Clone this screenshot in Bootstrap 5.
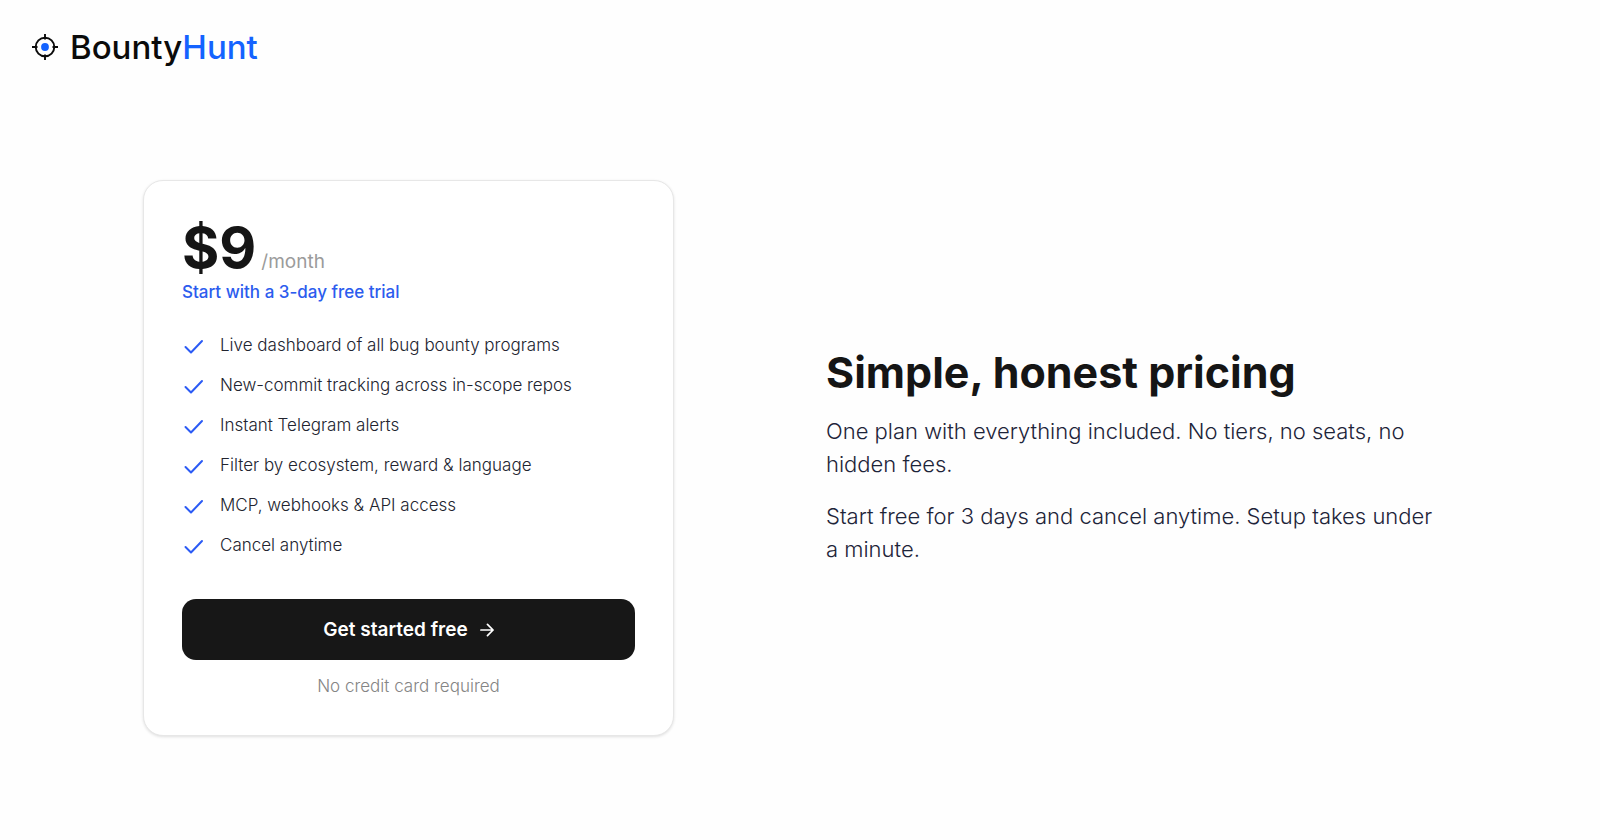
<!DOCTYPE html>
<html lang="en">
<head>
<meta charset="utf-8">
<meta name="viewport" content="width=device-width, initial-scale=1">
<title>BountyHunt – Pricing</title>
<link href="https://cdn.jsdelivr.net/npm/bootstrap@5.3.0/dist/css/bootstrap.min.css" rel="stylesheet">
<style>
  body { font-family: "Inter", "Liberation Sans", sans-serif; color: #151515; background: #fefefe; }
  .site-header { padding: 23px 32px 0; }
  .brand { font-size: 33px; line-height: 48px; gap: 11px; color: #0b0b0b; font-weight: 500; }
  .brand-accent { color: #1463ff; }
  .pricing { padding: 109px 24px 40px; }
  .plan { max-width: 531px; padding: 37px 38px; border: 1px solid #e7e7e7; border-radius: 20px; box-shadow: 0 1px 3px rgba(0,0,0,.12); background: #fff; }
  .price { font-size: 57px; line-height: 60px; font-weight: 700; }
  .price-line { gap: 5px; }
  .period { font-size: 19px; color: #9b9b9b; }
  .trial { font-size: 17px; line-height: 29px; font-weight: 500; color: #2c5cee; }
  .features { font-size: 17px; line-height: 24px; font-weight: 300; color: #22242f; gap: 16px; margin: 26px 0 42px; }
  .features li { gap: 14px; }
  .cta { font-size: 19px; line-height: 29px; font-weight: 600; padding: 16px; border-radius: 14px; background: #171717; color: #fff; gap: 12px; }
  .cta:hover { background: #333; color: #fff; }
  .note { font-size: 17px; line-height: 24px; font-weight: 300; color: #858585; margin-top: 14px; }
  .pitch { padding-bottom: 4px; }
  .pitch h1 { font-size: 43px; line-height: 52px; font-weight: 700; margin-bottom: 17px; }
  .pitch p { font-size: 22px; line-height: 33px; font-weight: 300; color: #1d2439; margin-bottom: 19px; max-width: 620px; }
  @media (min-width: 1200px) {
    .pricing { padding-left: 143px; padding-right: 143px; }
    .pitch { padding-left: 26px; }
  }
</style>
</head>
<body>
<header class="site-header">
  <a class="brand d-inline-flex align-items-center text-decoration-none" href="#">
    <svg width="27" height="27" viewBox="0 0 27 27" fill="none" stroke="#0b0b0b" stroke-width="1.900" aria-hidden="true">
      <circle cx="13" cy="13" r="9.300"/>
      <path d="M13 0v5.500M13 20.500v5.500M0 13h5.500M20.500 13h5.500"/>
      <circle cx="13" cy="13" r="3.900" fill="#1463ff" stroke="none"/>
    </svg>
    <span>Bounty<span class="brand-accent">Hunt</span></span>
  </a>
</header>
<main class="pricing">
  <div class="row g-0 align-items-center">
    <div class="col-lg-6">
      <section class="plan">
        <div class="price-line d-flex align-items-baseline"><span class="price">$9</span><span class="period">/month</span></div>
        <div class="trial">Start with a 3-day free trial</div>
        <ul class="features list-unstyled d-flex flex-column">
          <li class="d-flex align-items-center"><svg width="24" height="24" aria-hidden="true"><use href="#tick"/></svg>Live dashboard of all bug bounty programs</li>
          <li class="d-flex align-items-center"><svg width="24" height="24" aria-hidden="true"><use href="#tick"/></svg>New-commit tracking across in-scope repos</li>
          <li class="d-flex align-items-center"><svg width="24" height="24" aria-hidden="true"><use href="#tick"/></svg>Instant Telegram alerts</li>
          <li class="d-flex align-items-center"><svg width="24" height="24" aria-hidden="true"><use href="#tick"/></svg>Filter by ecosystem, reward &amp; language</li>
          <li class="d-flex align-items-center"><svg width="24" height="24" aria-hidden="true"><use href="#tick"/></svg>MCP, webhooks &amp; API access</li>
          <li class="d-flex align-items-center"><svg width="24" height="24" aria-hidden="true"><use href="#tick"/></svg>Cancel anytime</li>
        </ul>
        <button type="button" class="cta btn w-100 border-0 d-flex align-items-center justify-content-center">Get started free
          <svg width="14" height="14" viewBox="0 0 15 15" fill="none" stroke="currentColor" stroke-width="1.800" stroke-linecap="round" stroke-linejoin="round" aria-hidden="true"><path d="M1 7.500h13M8 1.500l6 6-6 6"/></svg>
        </button>
        <div class="note text-center">No credit card required</div>
      </section>
    </div>
    <div class="col-lg-6 pitch">
      <h1>Simple, honest pricing</h1>
      <p>One plan with everything included. No tiers, no seats, no hidden fees.</p>
      <p class="mb-0">Start free for 3 days and cancel anytime. Setup takes under a minute.</p>
    </div>
  </div>
</main>
<svg width="0" height="0" class="d-none" aria-hidden="true">
  <symbol id="tick" viewBox="0 0 24 24"><path d="M3.500 14l5.500 5.500L20 8" fill="none" stroke="#2b5bf5" stroke-width="2" stroke-linecap="round" stroke-linejoin="round"/></symbol>
</svg>
<script src="https://cdn.jsdelivr.net/npm/bootstrap@5.3.0/dist/js/bootstrap.bundle.min.js"></script>
</body>
</html>
